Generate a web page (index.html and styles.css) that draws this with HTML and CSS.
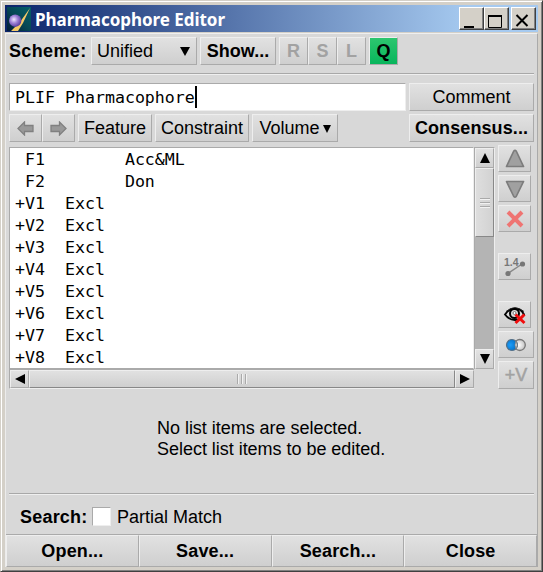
FILE: index.html
```html
<!DOCTYPE html>
<html lang="en">
<head>
<meta charset="utf-8">
<title>Pharmacophore Editor</title>
<link rel="stylesheet" href="styles.css">
</head>
<body>
<div class="window">
  <header class="titlebar">
    <svg class="logo" width="24" height="24" viewBox="0 0 24 24">
      <defs>
        <linearGradient id="teal" x1="0" y1="1" x2="1" y2="0"><stop offset="0" stop-color="#021a38"/><stop offset=".5" stop-color="#064754"/><stop offset="1" stop-color="#04606a"/></linearGradient>
        <radialGradient id="orb" cx=".4" cy=".4" r=".6"><stop offset="0" stop-color="#f1e9ff"/><stop offset=".5" stop-color="#9f83d6"/><stop offset="1" stop-color="#5c40a3"/></radialGradient>
      </defs>
      <rect width="24" height="24" fill="url(#teal)"/>
      <path d="M23 1 L13 15 L4 24 H11 L16 16Z" fill="#f5c968"/>
      <circle cx="8.200" cy="13.700" r="6.200" fill="url(#orb)"/>
    </svg>
    <h1 class="title"><span>Pharmacophore Editor</span></h1>
    <div class="controls">
      <button class="ctl"><svg width="20" height="18"><path d="M4 17h10" stroke="#000" stroke-width="2"/></svg></button>
      <button class="ctl"><svg width="20" height="18"><path d="M3.500 5.500h13v12h-13z" fill="none" stroke="#000"/><path d="M3 6h14" stroke="#000" stroke-width="2"/></svg></button>
      <button class="ctl ctl-close"><svg width="20" height="18"><path d="M4.500 5l11 11M15.500 5l-11 11" stroke="#000" stroke-width="2"/></svg></button>
    </div>
  </header>
  <main class="client">
    <div class="row scheme">
      <span class="label scheme-label">Scheme:</span>
      <button class="btn unified"><span>Unified</span><i class="caret"></i></button>
      <button class="btn bold show">Show...</button>
      <div class="group"><button class="btn mode" disabled>R</button><button class="btn mode" disabled>S</button><button class="btn mode" disabled>L</button></div>
      <button class="btn mode active">Q</button>
    </div>
    <div class="rule rule-top"></div>
    <div class="row name-row">
      <div class="field"><span>PLIF Pharmacophore</span><i class="cursor"></i></div>
      <button class="btn wide">Comment</button>
    </div>
    <div class="row tools">
      <div class="group">
        <button class="btn arrow"><svg width="17" height="15"><path d="M1 7.500L7.500 1V4.500H16V10.500H7.500V14Z" fill="#999" stroke="#808080" stroke-width="1.300"/></svg></button>
        <button class="btn arrow"><svg width="17" height="15"><path d="M16 7.500L9.500 1V4.500H1V10.500H9.500V14Z" fill="#999" stroke="#808080" stroke-width="1.300"/></svg></button>
      </div>
      <button class="btn feature">Feature</button>
      <button class="btn constraint">Constraint</button>
      <button class="btn volume">Volume<i class="caret small"></i></button>
      <button class="btn bold wide push">Consensus...</button>
    </div>
    <div class="row body">
      <div class="listbox">
        <pre class="list"> F1        Acc&amp;ML
 F2        Don
+V1  Excl
+V2  Excl
+V3  Excl
+V4  Excl
+V5  Excl
+V6  Excl
+V7  Excl
+V8  Excl</pre>
        <div class="vbar">
          <button class="sb"><svg width="10" height="10"><path d="M5 0L10 10H0Z"/></svg></button>
          <div class="vthumb"><i></i><i></i><i></i></div>
          <div class="track"></div>
          <button class="sb"><svg width="10" height="10"><path d="M5 10L10 0H0Z"/></svg></button>
        </div>
        <div class="hbar">
          <button class="sb"><svg width="10" height="10"><path d="M0 5L10 0V10Z"/></svg></button>
          <div class="hthumb"><i></i><i></i><i></i></div>
          <button class="sb"><svg width="10" height="10"><path d="M10 5L0 0V10Z"/></svg></button>
        </div>
      </div>
      <div class="side">
        <button class="btn tool"><svg width="22" height="20"><path d="M9.800 2Q11 .8 12.200 2L19.500 17.500H2.500Z" fill="#a0a0a0" stroke="#7c7c7c" stroke-width="1.700" stroke-linejoin="round"/></svg></button>
        <button class="btn tool"><svg width="22" height="20"><path d="M9.800 17.500Q11 18.700 12.200 17.500L19.500 2.500H2.500Z" fill="#a0a0a0" stroke="#7c7c7c" stroke-width="1.700" stroke-linejoin="round"/></svg></button>
        <button class="btn tool"><svg width="22" height="20"><path d="M4 3L18 17M18 3L4 17" stroke="#ef7472" stroke-width="4"/></svg></button>
        <button class="btn tool measure"><svg width="24" height="21"><text x="1" y="9.500" class="tiny">1.4</text><path d="M5 17.500L19 8" stroke="#888" stroke-width="1.500"/><circle cx="5" cy="17.500" r="2.600" fill="#777"/><circle cx="19.500" cy="8" r="2.600" fill="#777"/></svg></button>
        <button class="btn tool eye"><svg width="24" height="21"><path d="M2 10.500Q6 16 12 16T21 10.500Q18 4.500 12 4.500T2 10.500Z" fill="#ddd" stroke="#000" stroke-width="1.900"/><path d="M3 7.500Q12 0 21 7.500" fill="none" stroke="#222" stroke-width="1"/><circle cx="11.500" cy="9.500" r="4.500" fill="#ddd" stroke="#000" stroke-width="2"/><circle cx="11.500" cy="9" r="1.500" fill="#fff" stroke="#777"/><path d="M12.500 10.500L21.500 19M21.500 10.500L12.500 19" stroke="#f00d0d" stroke-width="3"/></svg></button>
        <button class="btn tool broad"><svg width="22" height="16"><defs><radialGradient id="pearl" cx=".4"><stop offset="0" stop-color="#fff"/><stop offset="1" stop-color="#ccc"/></radialGradient><radialGradient id="blue" cx=".35"><stop offset="0" stop-color="#1d9df8"/><stop offset="1" stop-color="#0878d1"/></radialGradient></defs><circle cx="14.800" cy="8" r="5.500" fill="url(#pearl)" stroke="#777" stroke-width="1.300"/><circle cx="7" cy="8" r="5.500" fill="url(#blue)" stroke="#556f85" stroke-width="1.200"/><path d="M11 4Q13.300 8 11 12Q9 8 11 4" fill="#e7eef4" stroke="#777" stroke-width=".8"/></svg></button>
        <button class="btn tool broad plus" disabled>+V</button>
      </div>
    </div>
    <p class="message">No list items are selected.<br>Select list items to be edited.</p>
    <div class="rule rule-bottom"></div>
    <div class="row search"><span class="label search-label">Search:</span><span class="check"></span><span class="partial">Partial Match</span></div>
    <footer class="footer"><button class="btn bold">Open...</button><button class="btn bold">Save...</button><button class="btn bold">Search...</button><button class="btn bold">Close</button></footer>
  </main>
</div>
</body>
</html>
```
FILE: styles.css
```css
* { box-sizing: border-box; }
body { margin: 0; font: 18px "Liberation Sans", Arial, sans-serif; color: #000; overflow: hidden; }
.window { width: 543px; height: 572px; background: #d4d0c8; border: 1px solid #d4d0c8; border-right: 1px solid #404040; border-bottom-color: #404040; box-shadow: inset 1px 1px #fff, inset -1px -1px #808080; padding: 4px 4px 3px 4px; }
.titlebar { height: 27px; display: flex; align-items: center; background: linear-gradient(90deg, #0a246a, #a6caf0 87%); padding: 0 2px; }
.logo { flex: none; }
.title { margin: 1px 0 0 4px; color: #fff; font: bold 17px/27px "Noto Sans", sans-serif; letter-spacing: -0.04px; white-space: nowrap; flex: 1; }
.controls { display: flex; }
.ctl { width: 25px; height: 23px; padding: 0; background: #d4d0c8; border: 1px solid; border-color: #fff #404040 #404040 #fff; box-shadow: inset -1px -1px #808080; }
.ctl svg { display: block; }
.ctl-close { margin-left: 2px; }
.client { margin-top: 1px; height: 534px; background: #d8d8d8; border: 1px solid; border-color: #efefef #aaa #efefef #ececec; border-bottom: 0; display: flex; flex-direction: column; }
.row { display: flex; margin: 0 3px; flex: none; }
.btn { height: 28px; padding: 0; display: flex; align-items: center; justify-content: center; font: 18px/26px "Liberation Sans", Arial, sans-serif; color: #000; white-space: nowrap; background: linear-gradient(#e1e1e1, #cfcfcf); border: 1px solid; border-color: #eee #aaa #aaa #eee; flex: none; }
.btn.bold, .label { font-weight: bold; }
.group { display: flex; }
.scheme { gap: 3px; margin-top: 3px; }
.label { line-height: 28px; }
.scheme-label { width: 79px; letter-spacing: 0.35px; }
.unified { width: 106px; justify-content: space-between; padding: 0 6px 0 5px; }
.caret { border: 5px solid transparent; border-top: 9px solid #000; border-bottom: 0; margin-top: 1px; }
.caret.small { border-width: 8px 4px 0; margin-left: 3px; }
.show { width: 76px; }
.mode { width: 29px; font-weight: bold; }
.btn:disabled { color: #a2a2a2; }
.btn.active { background: linear-gradient(#2dc66f, #08b55c); }
.rule { height: 2px; margin: 0 3px; background: #a8a8a8; border-bottom: 1px solid #efefef; flex: none; }
.rule-top { margin-top: 8px; }
.name-row { margin-top: 8px; gap: 3px; }
.field { width: 397px; height: 28px; display: flex; align-items: center; background: #fff; border: 1px solid; border-color: #aaa #eee #eee #aaa; padding-left: 5px; font: 16.6px/26px "DejaVu Sans Mono", monospace; }
.field span { margin-top: 2px; }
.cursor { width: 2px; height: 22px; background: #000; }
.wide { width: 125px; }
.tools { margin-top: 3px; gap: 3px; }
.arrow { width: 33px; }
.feature { width: 74px; }
.constraint { width: 94px; }
.volume { width: 86px; }
.push { margin-left: auto; letter-spacing: 0.1px; }
.body { margin-top: 3px; height: 244px; gap: 3px; }
.listbox { width: 486px; height: 242px; margin-top: 2px; display: grid; grid-template: 222px 20px / 465px 21px; }
.list { margin: 0; padding: 1px 5px; font: 16.6px/22px "DejaVu Sans Mono", monospace; background: #fff; border: 1px solid; border-color: #aaa #eee #aaa #aaa; overflow: hidden; }
.vbar { display: flex; flex-direction: column; border: solid #aaa; border-width: 1px 0 0 1px; border-right: 1px solid #eee; background: #b4b4b4; }
.sb { width: 19px; height: 20px; padding: 0; display: flex; align-items: center; justify-content: center; flex: none; background: linear-gradient(#e2e2e2, #d0d0d0); border: 1px solid; border-color: #eee #aaa #aaa #eee; }
.vthumb { height: 69px; display: flex; flex-direction: column; align-items: center; justify-content: center; gap: 2px; background: linear-gradient(90deg, #dedede, #d2d2d2); border: 1px solid; border-color: #eee #888 #888 #eee; }
.vthumb i { width: 10px; height: 2px; background: #aaa; border-bottom: 1px solid #f2f2f2; }
.track { flex: 1; }
.hbar { display: flex; border: solid #aaa; border-width: 1px 0 0 1px; border-bottom: 1px solid #eee; }
.hbar .sb { height: 18px; }
.hthumb { flex: 1; display: flex; align-items: center; justify-content: center; gap: 2px; background: linear-gradient(#e1e1e1, #cfcfcf); border: 1px solid; border-color: #eee #888 #888 #eee; }
.hthumb i { width: 2px; height: 10px; background: #aaa; border-right: 1px solid #f2f2f2; }
.side { display: flex; flex-direction: column; gap: 3px; }
.tool { width: 33px; height: 27px; }
.measure { margin-top: 18px; }
.eye { margin-top: 18px; }
.broad { width: 36px; }
.btn.plus { height: 28px; font-weight: normal; -webkit-text-stroke: 0.5px #a2a2a2; }
.tiny { font: bold 10.5px "Liberation Sans", sans-serif; fill: #777; }
.message { margin: 29px 0 0 151px; line-height: 21px; letter-spacing: -0.03px; flex: none; }
.rule-bottom { margin-top: 33px; }
.search { margin: 12px 3px 0 14px; height: 20px; }
.search .label, .partial { line-height: 20px; }
.search-label { width: 72px; letter-spacing: 0.2px; }
.check { width: 19px; height: 19px; background: #fff; border: 1px solid; border-color: #aaa #eee #eee #aaa; margin-right: 6px; }
.footer { margin-top: auto; height: 33px; display: grid; grid-template-columns: repeat(4, 1fr); border-top: 1px solid #aaa; }
.footer .btn { height: 32px; border-color: #eee #aaa #aaa #eee; letter-spacing: 0.15px; }
```
